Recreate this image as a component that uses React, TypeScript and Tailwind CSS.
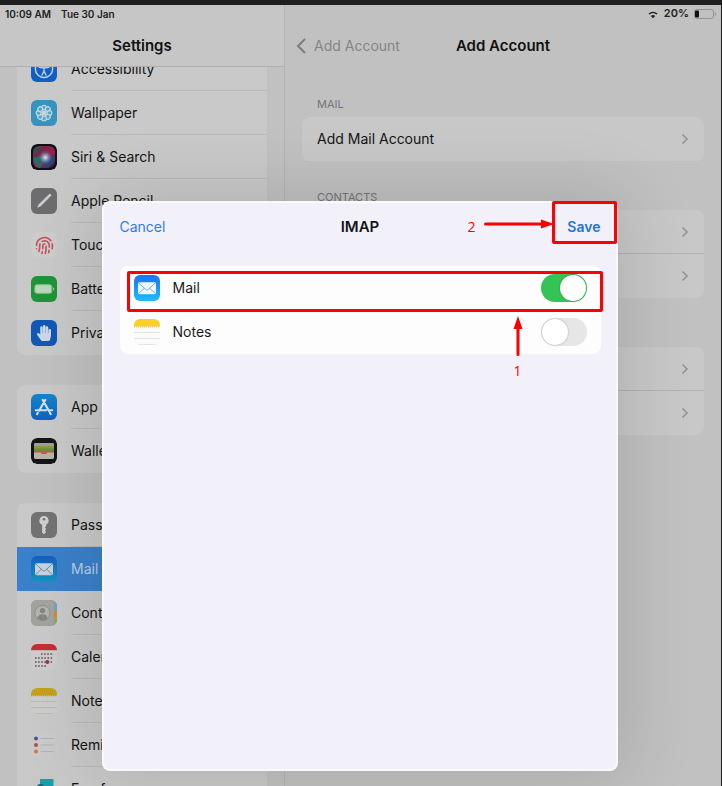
import type { ReactNode } from "react";
import { useState } from "react";
import { Fingerprint } from "lucide-react";
import { FaHandPaper } from "react-icons/fa";

function Tile({ children, className = "" }: { children?: ReactNode; className?: string }) {
  return (
    <svg viewBox="0 0 26 26" className={`block size-[26px] shrink-0 rounded-md ${className}`} aria-hidden="true">
      {children}
    </svg>
  );
}

function AccessibilityIcon() {
  return (
    <Tile className="bg-[#0f5fc4]">
      <circle cx="13" cy="13" r="8.6" fill="none" stroke="#b9cfea" strokeWidth="1.5" />
      <circle cx="13" cy="8.6" r="1.4" fill="#b9cfea" />
      <path d="M8.2 11.2l4.8.8 4.8-.8M13 12v3l-2 4M13 15l2 4" fill="none" stroke="#b9cfea" strokeWidth="1.4" strokeLinecap="round" />
    </Tile>
  );
}

function WallpaperIcon() {
  const petals = [0, 45, 90, 135, 180, 225, 270, 315];
  return (
    <Tile className="bg-[#3793bd]">
      {petals.map((angle) => (
        <circle key={angle} cx="13" cy="7.6" r="2.4" fill="#5aa5c6" stroke="#c3dbe4" strokeWidth="1.1" transform={`rotate(${angle} 13 13)`} />
      ))}
      <circle cx="13" cy="13" r="2.6" fill="#cfd5cc" />
    </Tile>
  );
}

function SiriIcon() {
  return (
    <Tile>
      <defs>
        <linearGradient id="siri-base" x1="0" y1="0" x2="1" y2="1">
          <stop offset="0" stopColor="#0e6b55" />
          <stop offset=".3" stopColor="#7a2148" />
          <stop offset=".6" stopColor="#a01f50" />
          <stop offset="1" stopColor="#241237" />
        </linearGradient>
        <radialGradient id="siri-glow" cx=".55" cy=".5" r=".5">
          <stop offset="0" stopColor="#dfe8ec" />
          <stop offset=".35" stopColor="#8fa5bc" stopOpacity=".8" />
          <stop offset="1" stopColor="#1d2b50" stopOpacity="0" />
        </radialGradient>
      </defs>
      <rect width="26" height="26" rx="6" fill="#111016" />
      <rect x="2" y="2" width="22" height="22" rx="6" fill="url(#siri-base)" />
      <path d="M2 14c5-2 8-2 11-1 1 4-1 8-4 11-4-2-7-5-7-10z" fill="#11806e" opacity=".75" />
      <path d="M13 13c4 1 8 0 11-1 1 6-4 12-11 12z" fill="#22498c" opacity=".8" />
      <circle cx="13.5" cy="13.5" r="8.5" fill="url(#siri-glow)" />
    </Tile>
  );
}

function PencilIcon() {
  return (
    <Tile className="bg-[#6d6d6f]">
      <path d="M6.2 19.8l1.4-3.2L18.8 5.4l1.8 1.8L9.4 18.4z" fill="#cfcfcf" />
    </Tile>
  );
}

function TouchIcon() {
  return (
    <span className="flex size-[26px] shrink-0 items-center justify-center rounded-md bg-[#cfcccc]">
      <Fingerprint className="size-[19px] text-[#c4505f]" strokeWidth={2} aria-hidden="true" />
    </span>
  );
}

function BatteryIcon() {
  return (
    <Tile className="bg-[#1f9438]">
      <rect x="3.8" y="8.7" width="17" height="8.6" rx="2.2" fill="#b9d8bd" stroke="#7fc08b" strokeWidth="1" />
      <path d="M22.2 11.3c1.3.6 1.3 2.8 0 3.4z" fill="#b9d8bd" />
    </Tile>
  );
}

function PrivacyIcon() {
  return (
    <span className="flex size-[26px] shrink-0 items-center justify-center rounded-md bg-[#1059b6]">
      <FaHandPaper className="size-4 text-[#cbd8e8]" aria-hidden="true" />
    </span>
  );
}

function StoreIcon() {
  return (
    <Tile className="bg-linear-to-b from-[#1685cc] to-[#1062c0]">
      <path d="M14.4 5.8L8.2 16.6M11.6 5.8l6.4 11.2M4.8 16.2h10.4M18 16.2h3.2M6.9 18.8l-.8 1.3M18.8 18.6l.9 1.5" fill="none" stroke="#d3e2ee" strokeWidth="2.1" strokeLinecap="round" />
    </Tile>
  );
}

function WalletIcon() {
  return (
    <Tile>
      <rect width="26" height="26" rx="6" fill="#141419" />
      <rect x="3" y="5" width="20" height="16" rx="2" fill="#b8b5ac" />
      <rect x="3" y="5" width="20" height="4" rx="1.5" fill="#9c9f9c" />
      <rect x="3" y="8" width="20" height="3" fill="#8f9a3c" />
      <rect x="3" y="10.5" width="20" height="3" fill="#718c3b" />
      <rect x="3" y="13" width="20" height="3" fill="#c5574f" />
      <path d="M3 14.5h6c1 0 1.4 2 4 2s3-2 4-2h6V19a2 2 0 0 1-2 2H5a2 2 0 0 1-2-2z" fill="#b9b4a8" />
    </Tile>
  );
}

function KeyIcon() {
  return (
    <Tile className="bg-[#737374]">
      <path d="M13 4a4.6 4.6 0 0 0-1.9 8.8v7.6L13 22.3l2.2-2.2-1.3-1.5 1.3-1.5-1.3-1.5 1.2-1.2v-1.7A4.6 4.6 0 0 0 13 4z" fill="#cfcfcf" />
      <circle cx="13" cy="7.3" r="1.3" fill="#737374" />
    </Tile>
  );
}

function MailIcon({ dim = false }: { dim?: boolean }) {
  return (
    <Tile className={dim ? "bg-linear-to-b from-[#185ec0] to-[#1595bf]" : "bg-linear-to-b from-[#1c74f4] to-[#1fbcfb]"}>
      <rect x="4" y="7.2" width="18" height="12" rx="1.8" fill={dim ? "#c9d3dc" : "#eef8ff"} />
      <path d="M4.8 8l6.7 6.3c.9.8 2.1.8 3 0L21.2 8M4.8 18.4l5.6-5.2M21.2 18.4l-5.6-5.2" fill="none" stroke={dim ? "#6e8fa9" : "#6fb2e6"} strokeWidth="1" />
    </Tile>
  );
}

function ContactsIcon() {
  return (
    <Tile>
      <rect width="26" height="26" fill="#9b9b96" />
      <path d="M23 3h3v7h-3z" fill="#6aa3cf" />
      <path d="M23 11h3v6h-3z" fill="#c98a3c" />
      <path d="M23 17h3v6h-3z" fill="#93a45c" />
      <rect width="23" height="26" rx="5" fill="#a3a39d" />
      <circle cx="11.5" cy="13" r="7.6" fill="#b4b4ae" stroke="#8a8a85" strokeWidth=".8" />
      <circle cx="11.5" cy="10.6" r="2.7" fill="#858580" />
      <path d="M6.3 18c1-3 3-3.8 5.2-3.8s4.2.8 5.2 3.8c-3 3.2-7.4 3.2-10.4 0z" fill="#858580" />
    </Tile>
  );
}

function CalendarIcon() {
  return (
    <Tile className="bg-[#cecccc]">
      <rect width="26" height="6.2" fill="#c22f35" />
      <g stroke="#5d5658" strokeWidth="1.4" strokeDasharray="1.6 1.5">
        <path d="M10 10h12.5" />
        <path d="M4 14h18.5" />
        <path d="M4 18h18.5" />
        <path d="M4 22h12" />
      </g>
      <circle cx="16.3" cy="18" r="2" fill="#a3303c" />
    </Tile>
  );
}

function NotesIcon({ dim = false }: { dim?: boolean }) {
  return (
    <Tile className={dim ? "bg-[#cdcdcb]" : "bg-[#fbfbfa]"}>
      <rect width="26" height="7.5" fill={dim ? "#c4a11c" : "#fad02c"} />
      <path d="M0 7.8h26" stroke={dim ? "#a7955a" : "#d9bd58"} strokeWidth="1" strokeDasharray="1 1" />
      <path d="M0 13.5h26M0 19.5h26M3 25.5h20" stroke={dim ? "#b9b9b7" : "#e4e4e2"} strokeWidth="1" />
    </Tile>
  );
}

function RemindersIcon() {
  return (
    <Tile className="bg-[#cbcaca]">
      <circle cx="5" cy="6.5" r="2" fill="#4f5a86" />
      <circle cx="5" cy="13" r="2" fill="#c2474a" />
      <circle cx="5" cy="19.5" r="2" fill="#cf7a4d" />
      <path d="M9.5 6.5h13M9.5 13h13M9.5 19.5h13" stroke="#b2b2b2" strokeWidth="1" />
    </Tile>
  );
}

function FreeformIcon() {
  return (
    <Tile className="bg-[#c6c8c8]">
      <path d="M9 3h13.5v12H9z" fill="#179fb0" />
      <circle cx="9.5" cy="12" r="4" fill="#1d6470" />
      <path d="M3 21c5-9 10 4 20-6" fill="none" stroke="#2567a8" strokeWidth="1.5" />
    </Tile>
  );
}

type Item = { label: string; icon: ReactNode; selected?: boolean };

const groups: Item[][] = [
  [
    { label: "Accessibility", icon: <AccessibilityIcon /> },
    { label: "Wallpaper", icon: <WallpaperIcon /> },
    { label: "Siri & Search", icon: <SiriIcon /> },
    { label: "Apple Pencil", icon: <PencilIcon /> },
    { label: "Touch ID", icon: <TouchIcon /> },
    { label: "Battery", icon: <BatteryIcon /> },
    { label: "Privacy", icon: <PrivacyIcon /> },
  ],
  [
    { label: "App Store", icon: <StoreIcon /> },
    { label: "Wallet", icon: <WalletIcon /> },
  ],
  [
    { label: "Passwords", icon: <KeyIcon /> },
    { label: "Mail", icon: <MailIcon dim />, selected: true },
    { label: "Contacts", icon: <ContactsIcon /> },
    { label: "Calendar", icon: <CalendarIcon /> },
    { label: "Notes", icon: <NotesIcon dim /> },
    { label: "Reminders", icon: <RemindersIcon /> },
    { label: "Freeform", icon: <FreeformIcon /> },
  ],
];

function SidebarRow({ item, last }: { item: Item; last: boolean }) {
  return (
    <button
      type="button"
      className={`flex h-11 w-full items-center gap-3.5 pl-3.5 text-left ${item.selected ? "bg-[#3b80ca] text-[#b8cfe8]" : "text-[#141414]"}`}
    >
      {item.icon}
      <span className={`flex h-full min-w-0 flex-1 items-center border-b whitespace-nowrap ${last || item.selected ? "border-transparent" : "border-[#bababa]"}`}>
        {item.label}
      </span>
    </button>
  );
}

function Sidebar() {
  return (
    <aside className="flex w-[285px] shrink-0 flex-col border-r border-[#b3b3b3]">
      <header className="h-[62px] shrink-0 border-b border-[#afafaf] bg-[#c6c6c6]">
        <div className="flex h-[18px] items-center gap-2.5 pl-[5px] text-[10px] font-semibold text-[#222]">
          <span>10:09 AM</span>
          <span>Tue 30 Jan</span>
        </div>
        <h1 className="flex h-[45px] items-center justify-center text-[15px] font-semibold text-[#111]">Settings</h1>
      </header>
      <nav className="min-h-0 flex-1 overflow-hidden px-[17px]">
        <div className="-mt-5 flex flex-col gap-[30px]">
          {groups.map((group) => (
            <div key={group[0].label} className="overflow-hidden rounded-lg bg-[#c9c9c9]">
              {group.map((item, i) => (
                <SidebarRow key={item.label} item={item} last={i === group.length - 1} />
              ))}
            </div>
          ))}
        </div>
      </nav>
    </aside>
  );
}

function Chevron() {
  return (
    <svg viewBox="0 0 8 12" className="h-3 w-2" fill="none" stroke="#949494" strokeWidth="1.6" aria-hidden="true">
      <path d="M1.5 1.5L6 6l-4.5 4.5" />
    </svg>
  );
}

function AccountRow({ label, children, divided = false }: { label: string; children?: ReactNode; divided?: boolean }) {
  return (
    <button type="button" aria-label={label} className="block h-11 w-full pl-[15px] text-left text-[#141414]">
      <span className={`flex h-full items-center justify-between border-b pr-[15px] ${divided ? "border-[#b2b2b2]" : "border-transparent"}`}>
        <span>{children}</span>
        <Chevron />
      </span>
    </button>
  );
}

function Section({ title, children }: { title?: string; children: ReactNode }) {
  return (
    <section>
      <h3 className="flex h-[49px] items-end pb-1 pl-[15px] text-[11px] text-[#747479]">{title}</h3>
      <div className="overflow-hidden rounded-lg bg-[#c8c8c8]">{children}</div>
    </section>
  );
}

function Detail() {
  return (
    <main className="min-w-0 flex-1">
      <div className="flex h-[18px] items-center justify-end gap-[5px] pr-1 text-[11px] font-semibold text-[#222]">
        <svg viewBox="0 0 12 9" className="h-[9px] w-3" aria-hidden="true">
          <path d="M2 4c2.3-2 5.7-2 8 0" fill="none" stroke="#222" strokeWidth="1.6" />
          <path d="M3.8 5.9c1.500-1.2 2.9-1.2 4.4 0L6 8.3z" fill="#222" />
        </svg>
        <span>20%</span>
        <svg viewBox="0 0 23 10" className="h-2.5 w-[23px]" aria-hidden="true">
          <rect x=".5" y=".5" width="19" height="9" rx="2.5" fill="none" stroke="#929292" />
          <rect x="1" y="1.5" width="4" height="7" rx="1" fill="#111" />
          <path d="M21 3.2c1.5.6 1.5 3 0 3.6z" fill="#929292" />
        </svg>
      </div>
      <div className="grid h-[45px] grid-cols-[1fr_auto_1fr] items-center px-[11px]">
        <button type="button" className="flex items-center gap-2 text-[#858585]">
          <svg viewBox="0 0 10 16" className="h-4 w-2.5" fill="none" stroke="#7d7d7d" strokeWidth="2" aria-hidden="true">
            <path d="M9 1L2 8l7 7" />
          </svg>
          Add Account
        </button>
        <h2 className="text-[15px] font-semibold text-[#111]">Add Account</h2>
      </div>
      <div className="px-[17px]">
        <Section title="MAIL">
          <AccountRow label="Add Mail Account">Add Mail Account</AccountRow>
        </Section>
        <Section title="CONTACTS">
          <AccountRow label="Add LDAP Account" divided />
          <AccountRow label="Add CardDAV Account" />
        </Section>
        <Section>
          <AccountRow label="Add CalDAV Account" divided />
          <AccountRow label="Add Subscribed Calendar" />
        </Section>
      </div>
    </main>
  );
}

function SwitchRow({ id, label, icon, initial, children }: { id: string; label: string; icon: ReactNode; initial: boolean; children?: ReactNode }) {
  const [on, setOn] = useState(initial);
  return (
    <div className="relative flex h-11 items-center gap-[13px] px-3.5">
      {icon}
      <label htmlFor={id} className="flex-1 text-[#1a1a1a]">{label}</label>
      <input
        id={id}
        type="checkbox"
        checked={on}
        onChange={(e) => setOn(e.target.checked)}
        className="relative h-7 w-[46px] appearance-none rounded-full bg-[#e6e6e7] before:absolute before:top-px before:left-px before:size-[26px] before:rounded-full before:bg-white before:shadow-[0_0_2px_rgba(0,0,0,0.3)] checked:bg-[#34c455] checked:before:left-[19px]"
      />
      {children}
    </div>
  );
}

function ImapDialog() {
  return (
    <div role="dialog" aria-label="IMAP" className="relative w-full max-w-[516px] rounded-lg border-2 border-[#f9f9fc] bg-[#f2f1fa] pr-[15px] pl-4 shadow-[0_0_70px_10px_rgba(0,0,0,0.12)]">
      <div className="grid h-12 grid-cols-3 items-center">
        <button type="button" className="justify-self-start text-[#2e7de0]">Cancel</button>
        <h2 className="justify-self-center text-[15px] font-semibold text-[#151515]">IMAP</h2>
        <button type="button" className="justify-self-end font-semibold text-[#2673d8]">Save</button>
      </div>
      <div className="mt-[15px] rounded-lg bg-[#fdfdfe]">
        <SwitchRow id="mail" label="Mail" icon={<MailIcon />} initial>
          <div className="pointer-events-none absolute top-[5px] -right-[2px] -bottom-[2px] left-[7px] rounded-xs border-3 border-[#fe0000]" />
        </SwitchRow>
        <SwitchRow id="notes" label="Notes" icon={<NotesIcon />} initial={false} />
      </div>

      <div className="pointer-events-none absolute -top-[2px] -right-px h-[43px] w-[65px] rounded-xs border-3 border-[#fe0000]" />
      <div className="pointer-events-none absolute top-[10px] right-[62px] flex items-start gap-2 font-['Open_Sans',sans-serif] text-sm text-[#fe0000]">
        <span className="pt-1">2</span>
        <svg viewBox="0 0 70 10" className="mt-1.5 h-2.5 w-[70px]" aria-hidden="true">
          <path d="M1.5 5h58" stroke="#fe0000" strokeWidth="3" strokeLinecap="round" />
          <path d="M57 .5L70 5 57 9.5z" fill="#fe0000" />
        </svg>
      </div>
      <div className="pointer-events-none absolute top-[112px] right-[93px] flex flex-col items-center gap-1 font-['Open_Sans',sans-serif] text-sm text-[#fe0000]">
        <svg viewBox="0 0 10 42" className="h-[42px] w-2.5" aria-hidden="true">
          <path d="M5 12v27.5" stroke="#fe0000" strokeWidth="3" strokeLinecap="round" />
          <path d="M.5 14L5 1l4.5 13z" fill="#fe0000" />
        </svg>
        <span>1</span>
      </div>
    </div>
  );
}

export default function App() {
  return (
    <div className="relative flex h-screen overflow-hidden border-t-5 border-r border-[#1f1f1f] bg-[#c1c1c1] font-['Inter','Liberation_Sans',sans-serif] text-sm">
      <Sidebar />
      <Detail />
      <div className="absolute inset-0 flex justify-center pt-[196px] pr-0.5 pb-[15px]">
        <ImapDialog />
      </div>
    </div>
  );
}
